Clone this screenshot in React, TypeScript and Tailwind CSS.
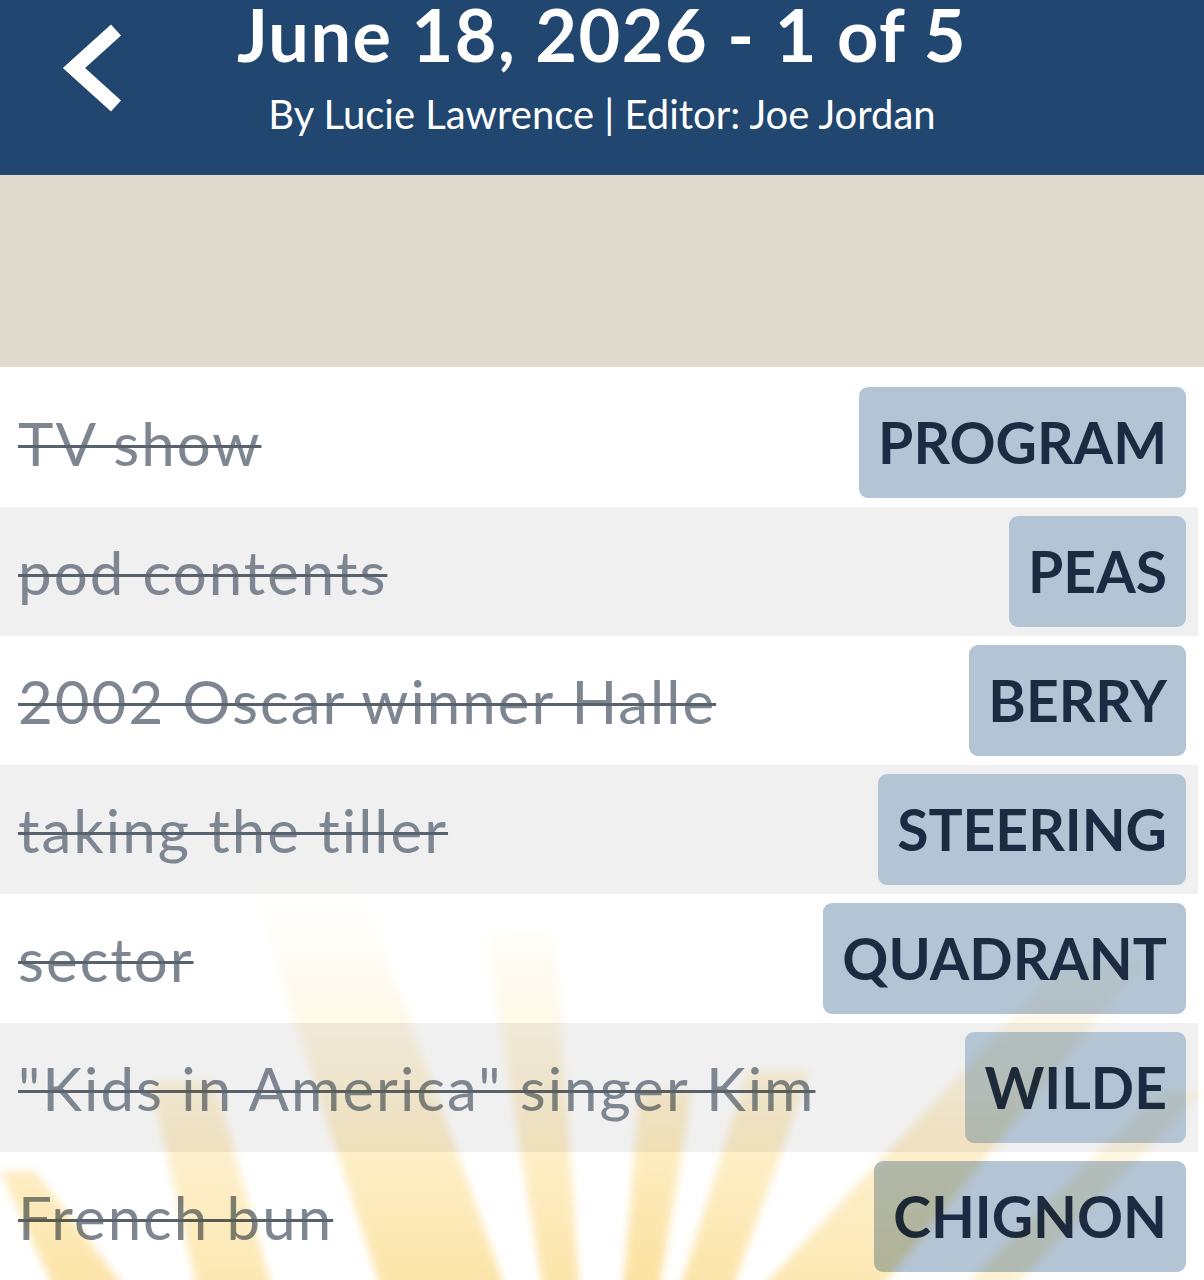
import React from "react";

const rows = [
  { clue: "TV show", answer: "PROGRAM" },
  { clue: "pod contents", answer: "PEAS" },
  { clue: "2002 Oscar winner Halle", answer: "BERRY" },
  { clue: "taking the tiller", answer: "STEERING" },
  { clue: "sector", answer: "QUADRANT" },
  { clue: "\"Kids in America\" singer Kim", answer: "WILDE" },
  { clue: "French bun", answer: "CHIGNON" },
];

// rays given as polygons in page coordinates, with their strength
const rays: { p: number[]; o: number }[] = [
  { p: [0, 1170, 35, 1170, 135, 1300, 60, 1300], o: 0.9 },
  { p: [150, 1080, 215, 1080, 275, 1300, 200, 1300], o: 0.8 },
  { p: [250, 880, 360, 880, 510, 1300, 385, 1300], o: 0.9 },
  { p: [485, 930, 555, 930, 580, 1300, 545, 1300], o: 0.9 },
  { p: [640, 1090, 692, 1090, 657, 1300, 622, 1300], o: 1 },
  { p: [748, 1070, 810, 1070, 728, 1300, 676, 1300], o: 0.9 },
  { p: [1065, 960, 1145, 960, 870, 1300, 750, 1300], o: 0.8 },
  { p: [1160, 1090, 1204, 1090, 1000, 1300, 950, 1300], o: 0.45 },
];

function Sunburst() {
  return (
    <svg
      className="pointer-events-none absolute left-0 top-0 h-full w-full mix-blend-multiply"
      viewBox="0 367 1204 913"
      preserveAspectRatio="none"
    >
      <defs>
        <linearGradient
          id="fade"
          gradientUnits="userSpaceOnUse"
          x1="0"
          y1="1280"
          x2="0"
          y2="880"
        >
          <stop offset="0" stopColor="#fbe09a" stopOpacity="0.95" />
          <stop offset="0.35" stopColor="#fce5a8" stopOpacity="0.7" />
          <stop offset="0.7" stopColor="#fdedc2" stopOpacity="0.35" />
          <stop offset="1" stopColor="#fff5dc" stopOpacity="0" />
        </linearGradient>
        <filter id="soft" x="-20%" y="-20%" width="140%" height="140%">
          <feGaussianBlur stdDeviation="4" />
        </filter>
      </defs>
      <g filter="url(#soft)">
        {rays.map((r, i) => (
          <polygon
            key={i}
            points={r.p.join(",")}
            fill="url(#fade)"
            opacity={r.o}
          />
        ))}
      </g>
    </svg>
  );
}

export default function App() {
  return (
    <div
      className="w-[1204px] h-[1280px] overflow-hidden bg-white"
      style={{ fontFamily: "Lato, 'Noto Sans', sans-serif" }}
    >
      <header className="relative h-[175px] bg-[#21466f] text-white flex flex-col items-center">
        <svg
          className="absolute left-[60px] top-[22px]"
          width="64"
          height="92"
          viewBox="0 0 64 92"
        >
          <polyline
            points="56,8 14,46 56,84"
            fill="none"
            stroke="white"
            strokeWidth="15"
            strokeLinejoin="miter"
          />
        </svg>
        <h1 className="pt-[4px] text-[72px] font-bold leading-[60px] tracking-[1.5px]">
          June 18, 2026 - 1 of 5
        </h1>
        <p className="mt-[26px] text-[40px] leading-[48px]">
          By Lucie Lawrence | Editor: Joe Jordan
        </p>
      </header>
      <div className="h-[192px] bg-[#dfd9ce]" />
      <div className="relative pt-[11px]">
        {rows.map((r, i) => (
          <div
            key={i}
            className={`flex w-[1198px] items-center justify-between py-[9px] pl-[18px] pr-[12px] ${
              i % 2 === 1 ? "bg-[#f0f0f0]" : "bg-white"
            }`}
          >
            <span className="text-[60px] leading-none tracking-[2px] text-[#7d8691] line-through decoration-[#58626d] decoration-[3px]">
              {r.clue}
            </span>
            <span className="flex h-[111px] items-center rounded-[9px] bg-[#b3c4d4] px-[19px] text-[57px] font-bold leading-none text-[#1c2b42]">
              {r.answer}
            </span>
          </div>
        ))}
        <Sunburst />
      </div>
    </div>
  );
}
